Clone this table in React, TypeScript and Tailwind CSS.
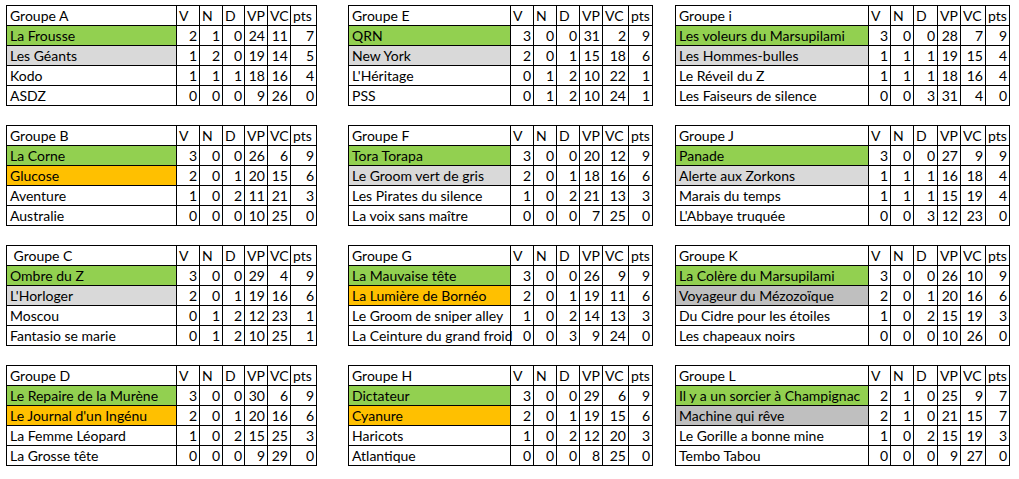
type Row = { name: string; bg?: string; v: number[] };
type Group = { title: string; rows: Row[] };

const GREEN = "bg-[#92d050]";
const GRAY = "bg-[#d9d9d9]";
const DARK = "bg-[#bfbfbf]";
const ORANGE = "bg-[#ffc000]";

const columns: { width: string; widths: string[]; groups: Group[] }[] = [
  {
    width: "w-[310px]",
    widths: ["w-[170px]", "w-[23px]", "w-[23px]", "w-[22px]", "w-[23px]", "w-[23px]", "w-[26px]"],
    groups: [
      {
        title: "Groupe A",
        rows: [
          { name: "La Frousse", bg: GREEN, v: [2, 1, 0, 24, 11, 7] },
          { name: "Les Géants", bg: GRAY, v: [1, 2, 0, 19, 14, 5] },
          { name: "Kodo", v: [1, 1, 1, 18, 16, 4] },
          { name: "ASDZ", v: [0, 0, 0, 9, 26, 0] },
        ],
      },
      {
        title: "Groupe B",
        rows: [
          { name: "La Corne", bg: GREEN, v: [3, 0, 0, 26, 6, 9] },
          { name: "Glucose", bg: ORANGE, v: [2, 0, 1, 20, 15, 6] },
          { name: "Aventure", v: [1, 0, 2, 11, 21, 3] },
          { name: "Australie", v: [0, 0, 0, 10, 25, 0] },
        ],
      },
      {
        title: "\u00a0Groupe C",
        rows: [
          { name: "Ombre du Z", bg: GREEN, v: [3, 0, 0, 29, 4, 9] },
          { name: "L'Horloger", bg: GRAY, v: [2, 0, 1, 19, 16, 6] },
          { name: "Moscou", v: [0, 1, 2, 12, 23, 1] },
          { name: "Fantasio se marie", v: [0, 1, 2, 10, 25, 1] },
        ],
      },
      {
        title: "Groupe D",
        rows: [
          { name: "Le Repaire de la Murène", bg: GREEN, v: [3, 0, 0, 30, 6, 9] },
          { name: "Le Journal d'un Ingénu", bg: ORANGE, v: [2, 0, 1, 20, 16, 6] },
          { name: "La Femme Léopard", v: [1, 0, 2, 15, 25, 3] },
          { name: "La Grosse tête", v: [0, 0, 0, 9, 29, 0] },
        ],
      },
    ],
  },
  {
    width: "w-[304px]",
    widths: ["w-[162px]", "w-[23px]", "w-[23px]", "w-[23px]", "w-[23px]", "w-[26px]", "w-[24px]"],
    groups: [
      {
        title: "Groupe E",
        rows: [
          { name: "QRN", bg: GREEN, v: [3, 0, 0, 31, 2, 9] },
          { name: "New York", bg: GRAY, v: [2, 0, 1, 15, 18, 6] },
          { name: "L'Héritage", v: [0, 1, 2, 10, 22, 1] },
          { name: "PSS", v: [0, 1, 2, 10, 24, 1] },
        ],
      },
      {
        title: "Groupe F",
        rows: [
          { name: "Tora Torapa", bg: GREEN, v: [3, 0, 0, 20, 12, 9] },
          { name: "Le Groom vert de gris", bg: GRAY, v: [2, 0, 1, 18, 16, 6] },
          { name: "Les Pirates du silence", v: [1, 0, 2, 21, 13, 3] },
          { name: "La voix sans maître", v: [0, 0, 0, 7, 25, 0] },
        ],
      },
      {
        title: "Groupe G",
        rows: [
          { name: "La Mauvaise tête", bg: GREEN, v: [3, 0, 0, 26, 9, 9] },
          { name: "La Lumière de Bornéo", bg: ORANGE, v: [2, 0, 1, 19, 11, 6] },
          { name: "Le Groom de sniper alley", v: [1, 0, 2, 14, 13, 3] },
          { name: "La Ceinture du grand froid", v: [0, 0, 3, 9, 24, 0] },
        ],
      },
      {
        title: "Groupe H",
        rows: [
          { name: "Dictateur", bg: GREEN, v: [3, 0, 0, 29, 6, 9] },
          { name: "Cyanure", bg: ORANGE, v: [2, 0, 1, 19, 15, 6] },
          { name: "Haricots", v: [1, 0, 2, 12, 20, 3] },
          { name: "Atlantique", v: [0, 0, 0, 8, 25, 0] },
        ],
      },
    ],
  },
  {
    width: "w-[334px]",
    widths: ["w-[193px]", "w-[22px]", "w-[23px]", "w-[24px]", "w-[23px]", "w-[25px]", "w-[24px]"],
    groups: [
      {
        title: "Groupe i",
        rows: [
          { name: "Les voleurs du Marsupilami", bg: GREEN, v: [3, 0, 0, 28, 7, 9] },
          { name: "Les Hommes-bulles", bg: GRAY, v: [1, 1, 1, 19, 15, 4] },
          { name: "Le Réveil du Z", v: [1, 1, 1, 18, 16, 4] },
          { name: "Les Faiseurs de silence", v: [0, 0, 3, 31, 4, 0] },
        ],
      },
      {
        title: "Groupe J",
        rows: [
          { name: "Panade", bg: GREEN, v: [3, 0, 0, 27, 9, 9] },
          { name: "Alerte aux Zorkons", bg: GRAY, v: [1, 1, 1, 16, 18, 4] },
          { name: "Marais du temps", v: [1, 1, 1, 15, 19, 4] },
          { name: "L'Abbaye truquée", v: [0, 0, 3, 12, 23, 0] },
        ],
      },
      {
        title: "Groupe K",
        rows: [
          { name: "La Colère du Marsupilami", bg: GREEN, v: [3, 0, 0, 26, 10, 9] },
          { name: "Voyageur du Mézozoïque", bg: DARK, v: [2, 0, 1, 20, 16, 6] },
          { name: "Du Cidre pour les étoiles", v: [1, 0, 2, 15, 19, 3] },
          { name: "Les chapeaux noirs", v: [0, 0, 0, 10, 26, 0] },
        ],
      },
      {
        title: "Groupe L",
        rows: [
          { name: "Il y a un sorcier à Champignac", bg: GREEN, v: [2, 1, 0, 25, 9, 7] },
          { name: "Machine qui rêve", bg: DARK, v: [2, 1, 0, 21, 15, 7] },
          { name: "Le Gorille a bonne mine", v: [1, 0, 2, 15, 19, 3] },
          { name: "Tembo Tabou", v: [0, 0, 0, 9, 27, 0] },
        ],
      },
    ],
  },
];

const heads = ["V", "N", "D", "VP", "VC", "pts"];

function GroupTable({ group, width, widths }: { group: Group; width: string; widths: string[] }) {
  return (
    <table className={`table-fixed border-collapse ${width}`}>
      <colgroup>
        {widths.map((w, i) => (
          <col key={i} className={w} />
        ))}
      </colgroup>
      <tbody>
        <tr className="h-[20px]">
          <td className="border border-black px-[3px] py-0 leading-[18px] whitespace-pre">{group.title}</td>
          {heads.map((h) => (
            <td key={h} className="border border-black px-[2px] py-0 leading-[18px]">
              {h}
            </td>
          ))}
        </tr>
        {group.rows.map((r) => (
          <tr key={r.name} className="h-[20px]">
            <td className={`border border-black px-[3px] py-0 leading-[18px] whitespace-nowrap overflow-visible ${r.bg ?? ""}`}>
              {r.name}
            </td>
            {r.v.map((n, i) => (
              <td key={i} className="border border-black px-[2px] py-0 leading-[18px] text-right">
                {n}
              </td>
            ))}
          </tr>
        ))}
      </tbody>
    </table>
  );
}

export default function App() {
  return (
    <div className="w-[1019px] h-[479px] bg-white text-black font-['Lato',sans-serif] text-[14px] pt-[5px] pl-[6px] flex">
      {columns.map((c, ci) => (
        <div key={ci} className={`flex flex-col gap-[19px] ${ci === 1 ? "ml-[31px]" : ci === 2 ? "ml-[22px]" : ""}`}>
          {c.groups.map((g) => (
            <GroupTable key={g.title} group={g} width={c.width} widths={c.widths} />
          ))}
        </div>
      ))}
    </div>
  );
}
